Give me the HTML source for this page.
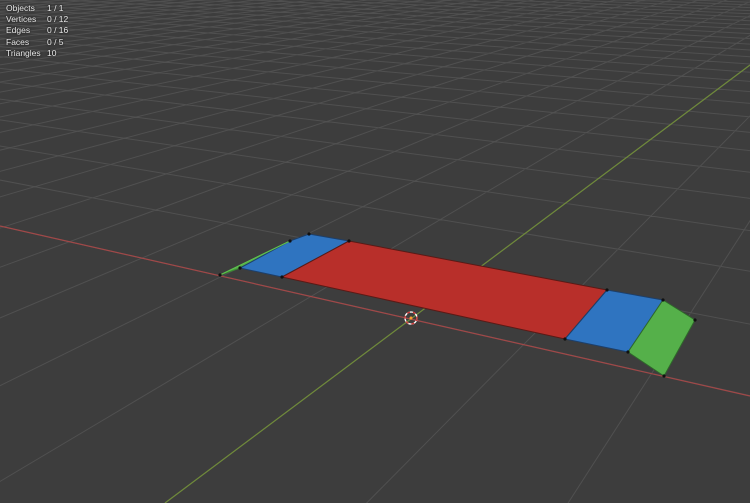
<!DOCTYPE html>
<html><head><meta charset="utf-8"><style>
html,body{margin:0;padding:0;background:#3d3d3d;width:750px;height:503px;overflow:hidden}
#v{position:absolute;left:0;top:0;display:block}
.st{position:absolute;left:6px;top:3px;font-family:"Liberation Sans",sans-serif;font-size:8.5px;color:#e8e8e8;line-height:11.2px;text-shadow:0 0 2px #000}
.st span{display:inline-block;width:41px}
</style></head><body>
<svg id="v" width="750" height="503" viewBox="0 0 750 503">
<rect width="750" height="503" fill="#3d3d3d"/>
<g id="grid" stroke="#505050" stroke-width="1" fill="none"></g>
<line x1="0" y1="226" x2="750" y2="396" stroke="#a04848" stroke-width="1.2"/>
<line x1="165" y1="503" x2="750" y2="65" stroke="#6f8a3a" stroke-width="1.2"/>
<g stroke-linejoin="round">
<polygon points="220,275 240,268 290,241" fill="#55b04a" stroke="#3a8a30"/>
<polygon points="240,268 290,241 309,234 349,241 282,277" fill="#2f74c0" stroke="#1d3f6a"/>
<polygon points="349,241 607,290 565,339 282,277" fill="#b82f2a" stroke="#5a1a16"/>
<polygon points="607,290 663,300 628,352 565,339" fill="#2f74c0" stroke="#1d3f6a"/>
<polygon points="663,300 695,320 664,376 628,352" fill="#55b04a" stroke="#2f6a2a"/>
</g>
<line x1="220" y1="275" x2="290" y2="241" stroke="#60c050" stroke-width="1.2"/>
<g fill="#111">
<circle cx="220" cy="275" r="1.6"/><circle cx="240" cy="268" r="1.6"/><circle cx="290" cy="241" r="1.6"/>
<circle cx="309" cy="234" r="1.6"/><circle cx="349" cy="241" r="1.6"/><circle cx="282" cy="277" r="1.6"/>
<circle cx="607" cy="290" r="1.6"/><circle cx="663" cy="300" r="1.6"/><circle cx="695" cy="320" r="1.6"/>
<circle cx="664" cy="376" r="1.6"/><circle cx="628" cy="352" r="1.6"/><circle cx="565" cy="339" r="1.6"/>
</g>
<circle cx="411" cy="318" r="6" fill="none" stroke="#fff" stroke-width="1.3"/>
<circle cx="411" cy="318" r="6" fill="none" stroke="#d03030" stroke-width="1.3" stroke-dasharray="3 3"/>
<circle cx="411" cy="318" r="1.5" fill="#ff9a30"/>
</svg>
<div class="st">
<div><span>Objects</span>1 / 1</div>
<div><span>Vertices</span>0 / 12</div>
<div><span>Edges</span>0 / 16</div>
<div><span>Faces</span>0 / 5</div>
<div><span>Triangles</span>10</div>
</div>
<script>
(function(){
var O=[411,319],VX=[-1354,-80],VY=[944,-80],sx=-0.03,sy=0.068;
function P(X,Y){var d=sx*X+sy*Y+1;return[(sx*X*VX[0]+sy*Y*VY[0]+O[0])/d,(sx*X*VX[1]+sy*Y*VY[1]+O[1])/d];}
var g=document.getElementById('grid'),s='';
for(var k=-200;k<=30;k+=2){var a=P(k,-12),b=P(k,300);s+='M'+a[0].toFixed(1)+' '+a[1].toFixed(1)+'L'+b[0].toFixed(1)+' '+b[1].toFixed(1);}
for(var k=-12;k<=300;k+=2){var a=P(-300,k),b=P(30,k);s+='M'+a[0].toFixed(1)+' '+a[1].toFixed(1)+'L'+b[0].toFixed(1)+' '+b[1].toFixed(1);}
var p=document.createElementNS('http://www.w3.org/2000/svg','path');p.setAttribute('d',s);g.appendChild(p);
})();
</script>
</body></html>
